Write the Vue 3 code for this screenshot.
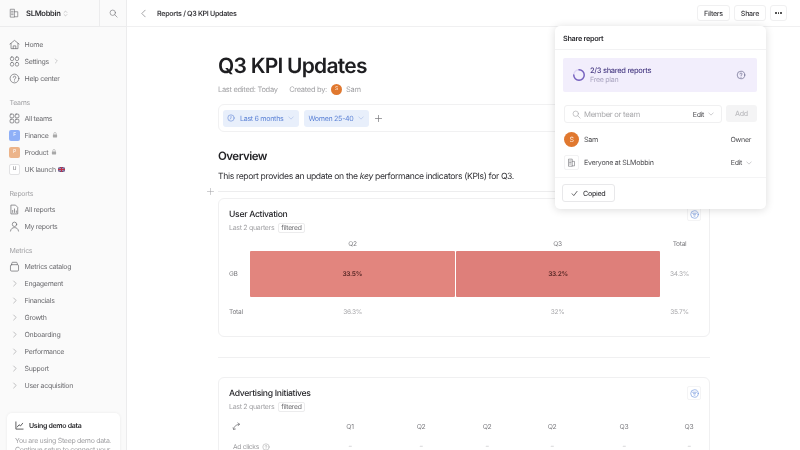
<script setup>
const mainNav = [
  { label: 'Home', icon: 'home' },
  { label: 'Settings', icon: 'settings', more: true },
  { label: 'Help center', icon: 'help' },
]
const metricGroups = ['Engagement', 'Financials', 'Growth', 'Onboarding', 'Performance', 'Support', 'User acquisition']
const adCols = ['Q1', 'Q2', 'Q2', 'Q2', 'Q3', 'Q3']
</script>

<template>
  <div class="page">
    <aside class="sidebar">
      <div class="side-top">
        <div class="org">
          <svg class="ic org-ic" viewBox="0 0 12 12"><path d="M1.5 10.5V1.5h5v9zM6.5 4.5h4v6h-4M3 4h2M3 6h2M3 8h2" /></svg>
          <span class="org-name">SLMobbin</span>
          <svg class="updown" viewBox="0 0 6 10"><path d="M1 3.5 3 1.5l2 2M1 6.5l2 2 2-2" /></svg>
        </div>
        <div class="side-search">
          <svg class="ic" viewBox="0 0 12 12"><circle cx="5" cy="5" r="3.6" /><path d="m7.8 7.8 3 3" /></svg>
        </div>
      </div>

      <nav class="nav">
        <div v-for="item in mainNav" :key="item.label" class="nav-item">
          <span class="nav-ic">
            <svg v-if="item.icon === 'home'" class="ic" viewBox="0 0 12 12"><path d="M1 5.5 6 1.5l5 4M2.2 4.8v5.7h7.6V4.8M4.6 10.5V7.5h2.8v3" /></svg>
            <svg v-else-if="item.icon === 'settings'" class="ic" viewBox="0 0 12 12"><rect x="1.5" y="1" width="3.6" height="4" rx="1.6" /><rect x="6.9" y="1" width="3.6" height="4" rx="1.6" /><rect x="1.5" y="7" width="3.6" height="4" rx="1.6" /><rect x="6.9" y="7" width="3.6" height="4" rx="1.6" /></svg>
            <svg v-else class="ic" viewBox="0 0 12 12"><circle cx="6" cy="6" r="4.8" /><path d="M4.6 4.8A1.4 1.4 0 1 1 6.4 6.2c-.3.1-.4.4-.4.8M6 8.6v.3" /></svg>
          </span>
          <span>{{ item.label }}</span>
          <svg v-if="item.more" class="more" viewBox="0 0 6 8"><path d="m2 1 3 3-3 3" /></svg>
        </div>

        <div class="nav-label">Teams</div>
        <div class="nav-item">
          <span class="nav-ic"><svg class="ic" viewBox="0 0 12 12"><rect x="1.2" y="1.2" width="4" height="4" rx="1" /><rect x="6.8" y="1.2" width="4" height="4" rx="1" /><rect x="1.2" y="6.8" width="4" height="4" rx="1" /><rect x="6.8" y="6.8" width="4" height="4" rx="1" /></svg></span>
          <span>All teams</span>
        </div>
        <div class="nav-item">
          <span class="nav-ic"><span class="team blue">F</span></span>
          <span>Finance</span>
          <svg class="lock" viewBox="0 0 8 8"><rect x="1.2" y="3.4" width="5.6" height="4" rx=".6" /><path d="M2.4 3.4V2.2a1.6 1.6 0 0 1 3.2 0v1.2" fill="none" stroke="#a8a8a8" stroke-width=".8" /></svg>
        </div>
        <div class="nav-item">
          <span class="nav-ic"><span class="team peach">P</span></span>
          <span>Product</span>
          <svg class="lock" viewBox="0 0 8 8"><rect x="1.2" y="3.4" width="5.6" height="4" rx=".6" /><path d="M2.4 3.4V2.2a1.6 1.6 0 0 1 3.2 0v1.2" fill="none" stroke="#a8a8a8" stroke-width=".8" /></svg>
        </div>
        <div class="nav-item">
          <span class="nav-ic"><span class="team plain">U</span></span>
          <span>UK launch</span>
          <svg class="flag" viewBox="0 0 8 6"><rect width="8" height="6" rx="1" fill="#5b4a80" /><path d="M0 0l8 6M8 0 0 6" stroke="#f0e4ea" stroke-width=".8" /><path d="M4 0v6M0 3h8" stroke="#c0304a" stroke-width="1.4" /></svg>
        </div>

        <div class="nav-label">Reports</div>
        <div class="nav-item">
          <span class="nav-ic"><svg class="ic" viewBox="0 0 12 12"><path d="M2.5 1.2h4.6l2.4 2.4v7.2h-7zM4 9.2V7M6 9.2V5.4M8 9.2V7.6" /></svg></span>
          <span>All reports</span>
        </div>
        <div class="nav-item">
          <span class="nav-ic"><svg class="ic" viewBox="0 0 12 12"><circle cx="6" cy="3.6" r="2.4" /><path d="M1.6 11c.4-2.6 2.2-3.8 4.4-3.8s4 1.2 4.4 3.8" /></svg></span>
          <span>My reports</span>
        </div>

        <div class="nav-label">Metrics</div>
        <div class="nav-item">
          <span class="nav-ic"><svg class="ic" viewBox="0 0 12 12"><rect x="1.6" y="4" width="8.8" height="7" rx="1.2" /><path d="M3 4V2.4c0-.6.4-1 1-1h4c.6 0 1 .4 1 1V4" /></svg></span>
          <span>Metrics catalog</span>
        </div>
        <div v-for="g in metricGroups" :key="g" class="nav-item">
          <span class="nav-ic"><svg class="chev" viewBox="0 0 6 8"><path d="m2 1 3 3-3 3" /></svg></span>
          <span>{{ g }}</span>
        </div>
      </nav>

      <div class="demo">
        <div class="demo-head">
          <svg class="ic dark" viewBox="0 0 12 12"><path d="M1.2 1.2v9.6h9.6M3 8l2.4-3 2 1.6 2.8-3.6" /></svg>
          <span>Using demo data</span>
        </div>
        <p>You are using Steep demo data.<br />Continue setup to connect your</p>
      </div>
    </aside>

    <main class="main">
      <header class="topbar">
        <svg class="back" viewBox="0 0 6 10"><path d="M5 1 1 5l4 4" /></svg>
        <span class="crumb">Reports / Q3 KPI Updates</span>
        <div class="actions">
          <button class="btn">Filters</button>
          <button class="btn">Share</button>
          <button class="btn dots"><i></i><i></i><i></i></button>
        </div>
      </header>

      <div class="doc">
        <h1>Q3 KPI Updates</h1>
        <div class="meta">
          <span>Last edited: Today</span>
          <span class="created">Created by:</span>
          <span class="avatar small">S</span>
          <span>Sam</span>
        </div>

        <div class="filters">
          <span class="chip first-chip">
            <svg class="clock" viewBox="0 0 10 10"><circle cx="5" cy="5" r="4" /><path d="M5 2.8V5l-1 1.4" /></svg>
            Last 6 months
            <svg class="chip-chev" viewBox="0 0 8 5"><path d="m1 1 3 3 3-3" /></svg>
          </span>
          <span class="chip">
            Women 25-40
            <svg class="chip-chev" viewBox="0 0 8 5"><path d="m1 1 3 3 3-3" /></svg>
          </span>
          <svg class="plus" viewBox="0 0 8 8"><path d="M4 .5v7M.5 4h7" /></svg>
        </div>

        <h2>Overview</h2>
        <p class="intro">This report provides an update on the <em>key</em> performance indicators (KPIs) for Q3.</p>

        <div class="rule-row">
          <svg class="add-block" viewBox="0 0 8 8"><path d="M4 .5v7M.5 4h7" /></svg>
        </div>

        <section class="card first">
          <span class="filter-badge">
            <svg viewBox="0 0 10 10"><circle cx="5" cy="5" r="4.2" /><path d="M2.8 3.6h4.4M3.8 5.2h2.4M4.6 6.8h.8" /></svg>
          </span>
          <h3>User Activation</h3>
          <div class="sub"><span>Last 2 quarters</span><span class="tag">filtered</span></div>
          <div class="heat">
            <span></span><span class="hd">Q2</span><span class="hd">Q3</span><span class="hd">Total</span>
            <span class="rw">GB</span>
            <span class="cell c1">33.5%</span>
            <span class="cell c2">33.2%</span>
            <span class="tot">34.3%</span>
            <span class="rw">Total</span>
            <span class="tot">36.3%</span>
            <span class="tot">32%</span>
            <span class="tot">35.7%</span>
          </div>
        </section>

        <hr class="divider" />

        <section class="card second">
          <span class="filter-badge">
            <svg viewBox="0 0 10 10"><circle cx="5" cy="5" r="4.2" /><path d="M2.8 3.6h4.4M3.8 5.2h2.4M4.6 6.8h.8" /></svg>
          </span>
          <h3>Advertising Initiatives</h3>
          <div class="sub"><span>Last 2 quarters</span><span class="tag">filtered</span></div>
          <div class="ad-grid">
            <svg class="swap" viewBox="0 0 10 10"><path d="M1.8 8.2C2.4 4.6 4.4 2.8 8.4 2.4M6.4 1l2 1.4-1.6 1.8M1.2 6.4l.6 1.9 2-.5" /></svg>
            <span v-for="(c, i) in adCols" :key="i" class="hd">{{ c }}</span>
            <span class="ad-label">Ad clicks
              <svg class="q" viewBox="0 0 10 10"><circle cx="5" cy="5" r="4" /><path d="M3.9 4a1.1 1.1 0 1 1 1.5 1.1c-.3.1-.4.3-.4.6M5 7.2v.2" /></svg>
            </span>
            <span v-for="(c, i) in adCols" :key="'d' + i" class="dash">–</span>
          </div>
        </section>
      </div>

      <div class="popover">
        <div class="pop-title">Share report</div>
        <div class="pop-body">
          <div class="plan">
            <svg class="ring" viewBox="0 0 16 16">
              <circle cx="8" cy="8" r="6" class="ring-bg" />
              <path d="M8 2a6 6 0 1 1-6 6" class="ring-fg" />
            </svg>
            <div class="plan-text">
              <strong>2/3 shared reports</strong>
              <span>Free plan</span>
            </div>
            <svg class="plan-q" viewBox="0 0 10 10"><circle cx="5" cy="5" r="3.8" /><path d="M3.9 4a1.1 1.1 0 1 1 1.5 1.1c-.3.1-.4.3-.4.6M5 7.2v.2" /></svg>
          </div>

          <div class="invite">
            <div class="invite-input">
              <svg class="ic light" viewBox="0 0 12 12"><circle cx="5" cy="5" r="3.6" /><path d="m7.8 7.8 3 3" /></svg>
              <span class="placeholder">Member or team</span>
              <span class="perm">Edit</span>
              <svg class="chip-chev grey" viewBox="0 0 8 5"><path d="m1 1 3 3 3-3" /></svg>
            </div>
            <button class="add">Add</button>
          </div>

          <div class="person">
            <span class="avatar">S</span>
            <span class="who">Sam</span>
            <span class="perm">Owner</span>
          </div>
          <div class="person org-row">
            <span class="org-box">
              <svg class="ic" viewBox="0 0 12 12"><path d="M2 10.5v-9h5v9zM7 4.5h3v6H7M3.4 4h2M3.4 6h2M3.4 8h2" /></svg>
            </span>
            <span class="who">Everyone at SLMobbin</span>
            <span class="perm">Edit</span>
            <svg class="chip-chev grey" viewBox="0 0 8 5"><path d="m1 1 3 3 3-3" /></svg>
          </div>
        </div>
        <div class="pop-foot">
          <button class="copied">
            <svg viewBox="0 0 10 10"><path d="m1.6 5.4 2.4 2.6 4.6-6" /></svg>
            Copied
          </button>
        </div>
      </div>
    </main>
  </div>
</template>

<style scoped>
* { box-sizing: border-box; }

.page {
  display: flex;
  width: 800px;
  height: 450px;
  overflow: hidden;
  background: #fff;
  font-family: Inter, "Liberation Sans", sans-serif;
  color: #26262a;
  font-size: 7px;
  letter-spacing: -.3px;
  text-rendering: geometricPrecision;
  filter: blur(.3px);
}
button { text-rendering: geometricPrecision; letter-spacing: -.3px; }

svg { fill: none; stroke: currentColor; stroke-linecap: round; stroke-linejoin: round; flex: none; }
.ic { width: 11px; height: 11px; stroke: #6f6f73; stroke-width: .8; }
.ic.dark { stroke: #2b2b2e; stroke-width: 1; width: 9px; height: 9px; }
.ic.light { stroke: #a3a3a6; }

/* sidebar */
.sidebar {
  width: 127px;
  flex: none;
  height: 450px;
  background: #fafafa;
  border-right: 1px solid #ececed;
  position: relative;
  overflow: hidden;
}
.side-top {
  display: flex;
  height: 27px;
  border-bottom: 1px solid #ececed;
}
.org {
  width: 100px;
  display: flex;
  align-items: center;
  padding-left: 9px;
  border-right: 1px solid #ececed;
}
.org-ic { width: 10px; height: 10px; }
.org-name { margin-left: 7px; font-weight: 600; font-size: 7.6px; color: #2f2f33; }
.updown { width: 5px; height: 7px; margin-left: 2.5px; stroke: #9c9c9f; stroke-width: .7; }
.side-search { flex: 1; display: flex; align-items: center; justify-content: center; padding-left: 1px; }
.side-search .ic { width: 9px; height: 9px; }

.nav { padding-top: 8.5px; }
.nav-item {
  display: flex;
  align-items: center;
  height: 17px;
  padding-left: 9px;
  color: #6c6c70;
  font-size: 7px;
}
.nav-ic { width: 15.5px; display: flex; align-items: center; flex: none; }
.nav-label { height: 23px; padding: 11px 0 0 9.5px; line-height: 10px; color: #a2a2a5; font-size: 7px; }
.more { width: 4px; height: 6px; margin-left: 5px; stroke: #a2a2a5; stroke-width: .8; }
.chev { width: 5px; height: 7px; margin-left: 3px; stroke: #a2a2a5; stroke-width: .8; }
.team {
  width: 11px;
  height: 11px;
  border-radius: 2px;
  color: #fff;
  font-size: 5px;
  display: flex;
  align-items: center;
  justify-content: center;
}
.blue { background: #8fb0f7; }
.peach { background: #ecb48a; }
.plain { background: #fff; border: 1px solid #e2e2e4; color: #66666a; }
.lock { width: 6px; height: 6px; margin-left: 3px; fill: #a8a8a8; stroke: none; }
.flag { width: 7px; height: 5px; margin-left: 2px; stroke: none; }

.demo {
  position: absolute;
  left: 7px;
  top: 413px;
  width: 113px;
  height: 70px;
  background: #fff;
  border-radius: 5px;
  box-shadow: 0 0 3px rgba(0, 0, 0, .07);
  padding: 8px 8px;
}
.demo-head { display: flex; align-items: center; gap: 5px; font-weight: 600; font-size: 7px; color: #2b2b2e; }
.demo p { margin: 7px 0 0; line-height: 8.5px; color: #a2a2a5; font-size: 7px; white-space: nowrap; }

/* main */
.main { flex: 1; position: relative; min-width: 0; }
.topbar {
  height: 27px;
  display: flex;
  align-items: center;
  padding: 0 13px 0 14px;
  border-bottom: 1px solid #f0f0f1;
}
.back { width: 5px; height: 9px; stroke: #77777b; stroke-width: .8; }
.crumb { margin-left: 11px; font-weight: 600; font-size: 7.1px; color: #37373b; }
.actions { margin-left: auto; display: flex; gap: 4px; }
.btn {
  height: 16px;
  border: 1px solid #f0f0f1;
  border-radius: 3px;
  background: #fff;
  font: 500 7.1px Inter, sans-serif;
  color: #3a3a3e;
  padding: 0 6px;
  display: flex;
  align-items: center;
}
.dots { gap: 1px; width: 17px; padding: 0 4px; justify-content: center; }
.dots i { width: 1.6px; height: 1.6px; border-radius: 50%; background: #333; }

.doc { width: 492px; margin-left: 91px; position: relative; }
h1 { margin: 0; padding-top: 25px; font-size: 21px; line-height: 30px; font-weight: 600; letter-spacing: -.75px; color: #1e1e21; }
.meta { display: flex; align-items: center; margin-top: 1px; height: 12px; color: #a2a2a5; font-size: 7.5px; }
.created { margin-left: 11.5px; margin-right: 4px; }
.avatar {
  width: 15px;
  height: 15px;
  border-radius: 50%;
  background: #e0782f;
  color: #fde9da;
  font-size: 7px;
  display: flex;
  align-items: center;
  justify-content: center;
  flex: none;
}
.avatar.small { width: 11px; height: 11px; font-size: 5px; margin-right: 4px; }

.filters {
  margin-top: 9px;
  height: 28px;
  border: 1px solid #f1f1f2;
  border-radius: 6px;
  display: flex;
  align-items: center;
  padding-left: 4px;
  gap: 4.5px;
}
.chip {
  height: 17px;
  background: #e8effb;
  border-radius: 3px;
  color: #5d83d6;
  font-size: 7.1px;
  display: flex;
  align-items: center;
  padding: 0 4.5px;
  gap: 2.5px;
}
.first-chip { padding-left: 4px; padding-right: 5px; gap: 3px; }
.clock { width: 8px; height: 8px; margin-right: 2px; stroke: #5d83d6; stroke-width: .7; }
.chip-chev { width: 6px; height: 4px; margin-left: 2px; stroke: #9fb5e4; stroke-width: .7; }
.chip-chev.grey { stroke: #a2a2a5; margin-left: 4px; }
.plus { width: 7px; height: 7px; margin-left: 2px; stroke: #77777b; stroke-width: .8; }

h2 { margin: 16px 0 0; font-size: 11.5px; line-height: 16px; font-weight: 600; letter-spacing: -.5px; color: #222225; }
.intro { margin: 7px 0 0; font-size: 8.6px; line-height: 12px; letter-spacing: -.35px; color: #303034; white-space: nowrap; }
.rule-row { margin-top: 8px; height: 1px; background: #ededee; position: relative; }
.add-block { position: absolute; left: -11px; top: -3px; width: 7px; height: 7px; stroke: #a2a2a5; stroke-width: .6; }

.card {
  border: 1px solid #f0f0f1;
  border-radius: 6px;
  position: relative;
  padding: 10px;
}
.first { margin-top: 6px; height: 139px; }
.second { height: 100px; }
h3 { margin: 0; font-size: 8.6px; line-height: 13px; font-weight: 500; color: #26262a; }
.sub { display: flex; align-items: center; gap: 4px; margin-top: .5px; color: #a2a2a5; font-size: 7px; }
.tag { border: 1px solid #ececed; border-radius: 2px; padding: 0 2px; line-height: 8px; color: #6f6f73; font-size: 6.8px; }
.filter-badge {
  position: absolute;
  right: 8px;
  top: 8px;
  width: 14px;
  height: 14px;
  border: 1px solid #f4f4f5;
  border-radius: 2px;
  display: flex;
  align-items: center;
  justify-content: center;
}
.filter-badge svg { width: 9px; height: 9px; stroke: #6d93dc; stroke-width: .7; }

.heat {
  display: grid;
  grid-template-columns: 21px 205px 205px 1fr;
  grid-template-rows: 15px 46px 30px;
  margin-top: 3.5px;
  font-size: 6.6px;
  align-items: center;
  text-align: center;
}
.hd { color: #7d7d81; font-size: 6.6px; }
.rw { text-align: left; color: #7d7d81; }
.cell {
  height: 46px;
  line-height: 46px;
  color: #5b2a28;
  font-weight: 600;
  border-radius: 1px;
}
.c1 { background: #e2857e; margin-right: .5px; }
.c2 { background: #de7f7a; margin-left: 1px; }
.tot { color: #aaaaad; }

.divider { border: 0; height: 1px; background: #f0f0f1; margin: 20px 0 19px; }

.ad-grid {
  display: grid;
  grid-template-columns: 87px 68px 74px 58px 72px 72px 58px;
  grid-auto-rows: 20px;
  margin-top: 5px;
  margin-right: -19px;
  align-items: center;
  text-align: center;
}
.ad-grid .hd { font-size: 6.8px; }
.swap { width: 9px; height: 9px; stroke: #6f6f73; stroke-width: .8; margin-left: 3px; }
.ad-label { display: flex; align-items: center; gap: 3px; color: #9a9a9d; font-size: 6.7px; padding-left: 4px; }
.q { width: 8px; height: 8px; stroke: #9a9a9d; stroke-width: .6; }
.dash { color: #b5b5b8; font-size: 6px; }

/* popover */
.popover {
  position: absolute;
  left: 428px;
  top: 26px;
  width: 211px;
  height: 183px;
  background: #fff;
  border-radius: 5px;
  box-shadow: 0 1px 8px rgba(0, 0, 0, .14);
  display: flex;
  flex-direction: column;
}
.pop-title {
  height: 24px;
  padding: 1px 8px 0;
  display: flex;
  align-items: center;
  font-weight: 600;
  font-size: 7.3px;
  color: #303034;
  border-bottom: 1px solid #f2f2f3;
}
.pop-body { padding: 8px 9px 0 8px; flex: 1; }
.plan {
  height: 34px;
  background: #f2eefc;
  border-radius: 2px;
  display: flex;
  align-items: center;
  padding: 0 9px;
}
.ring { width: 14px; height: 14px; stroke-width: 1.6; }
.ring-bg { stroke: #ddd5f4; }
.ring-fg { stroke: #7560bd; }
.plan-text { margin-left: 4px; display: flex; flex-direction: column; line-height: 9px; font-size: 7.5px; }
.plan-text strong { font-weight: 500; color: #4c3f86; }
.plan-text span { color: #aaa5c0; font-size: 7.1px; }
.plan-q { width: 10px; height: 10px; margin-left: auto; margin-right: 2px; stroke: #54547a; stroke-width: .6; }

.invite { display: flex; gap: 4px; margin-top: 13px; padding-left: 1px; }
.invite-input {
  width: 158px;
  height: 18px;
  border: 1px solid #f0f0f1;
  border-radius: 3px;
  display: flex;
  align-items: center;
  padding: 0 7px;
}
.invite-input .ic { width: 9px; height: 9px; }
.placeholder { margin-left: 3px; color: #a8a8ab; font-size: 7.7px; }
.invite-input .perm { margin-left: auto; }
.perm { color: #4d4d51; font-size: 7px; }
.add {
  width: 31px;
  height: 17px;
  border: 0;
  border-radius: 3px;
  background: #f4f4f5;
  color: #bdbdc0;
  font: 500 7.1px Inter, sans-serif;
}
.person {
  display: flex;
  align-items: center;
  height: 15px;
  margin-top: 9px;
  padding-left: 1px;
  padding-right: 6px;
}
.person .who { margin-left: 5px; color: #4d4d51; font-size: 7.1px; }
.person .perm:nth-last-child(1), .person .perm:nth-last-child(2) { margin-left: auto; }
.org-row { margin-top: 8px; padding-right: 5px; }
.org-box {
  width: 15px;
  height: 15px;
  border-radius: 2px;
  border: 1px solid #f2f2f3;
  display: flex;
  align-items: center;
  justify-content: center;
}
.org-box .ic { width: 9px; height: 9px; }

.pop-foot { height: 32px; border-top: 1px solid #f4f4f5; padding: 6px 7px; }
.copied {
  width: 53px;
  height: 18px;
  background: #fff;
  border: 1px solid #e8e8ea;
  border-radius: 3px;
  display: flex;
  align-items: center;
  gap: 5px;
  padding: 0 8px;
  font: 500 7.1px Inter, sans-serif;
  color: #3a3a3e;
}
.copied svg { width: 7px; height: 7px; stroke: #2b2b2e; stroke-width: 1; }
</style>
